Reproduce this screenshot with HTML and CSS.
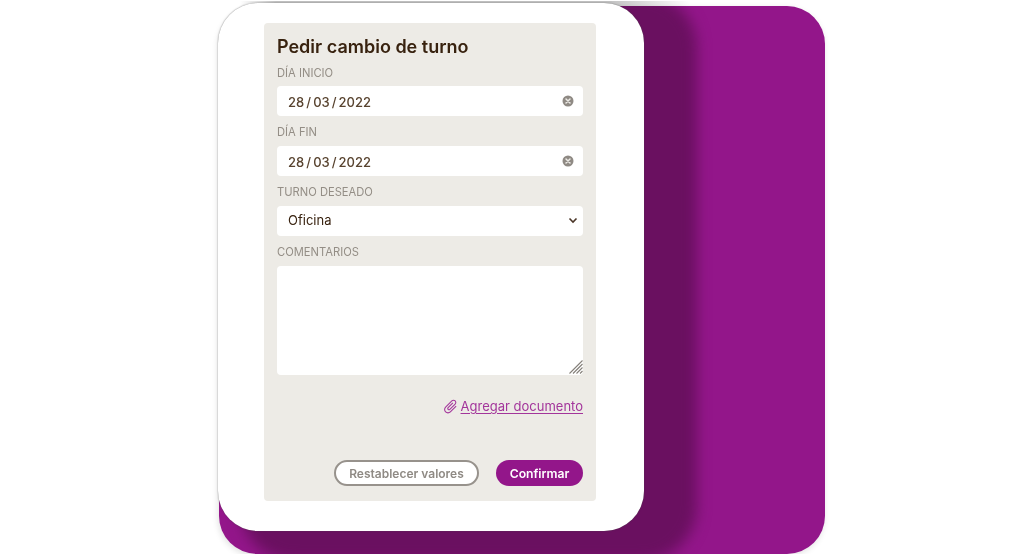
FILE: index.html
```html
<!DOCTYPE html>
<html lang="es">
<head>
<meta charset="utf-8">
<title>Pedir cambio de turno</title>
<link rel="stylesheet" href="styles.css">
</head>
<body>
<div class="stage">
  <div class="topline"></div>
  <div class="back"><div class="shade"></div></div>
  <div class="front">
    <form class="panel">
      <h1 class="title">Pedir cambio de turno</h1>
      <div class="label first">DÍA INICIO</div>
      <div class="field date">
        <span>28 / 03 / 2022</span>
        <svg class="clear" viewBox="0 0 12 12"><circle cx="6" cy="6" r="5.5" fill="#8f8a84"/><path d="M4 4l4 4M8 4l-4 4" stroke="#edebe6" stroke-width="1.5" stroke-linecap="round"/></svg>
      </div>
      <div class="label">DÍA FIN</div>
      <div class="field date">
        <span>28 / 03 / 2022</span>
        <svg class="clear" viewBox="0 0 12 12"><circle cx="6" cy="6" r="5.5" fill="#8f8a84"/><path d="M4 4l4 4M8 4l-4 4" stroke="#edebe6" stroke-width="1.5" stroke-linecap="round"/></svg>
      </div>
      <div class="label">TURNO DESEADO</div>
      <div class="field select">
        <span>Oficina</span>
        <svg class="chev" viewBox="0 0 10 7"><path d="M1.5 1.5L5 5l3.500-3.500" fill="none" stroke="#4a3527" stroke-width="1.600"/></svg>
      </div>
      <div class="label">COMENTARIOS</div>
      <div class="area">
        <svg class="grip" viewBox="0 0 14 14"><path d="M13.500 .5L.5 13.500M13.500 4L4 13.500M13.500 7.500L7.500 13.500M13.500 11L11 13.500" fill="none" stroke="#85807a" stroke-width="1.100"/></svg>
      </div>
      <div class="attach">
        <svg class="clip" viewBox="0 0 24 24"><path transform="rotate(45 12 12)" d="M16.500 6v11.500c0 2.210-1.790 4-4 4s-4-1.790-4-4V5c0-1.380 1.120-2.500 2.500-2.500s2.500 1.120 2.500 2.500v10.500c0 .55-.45 1-1 1s-1-.45-1-1V6H10v9.500c0 1.380 1.120 2.500 2.500 2.500s2.500-1.120 2.500-2.500V5c0-2.210-1.790-4-4-4S7 2.790 7 5v12.500c0 3.040 2.460 5.500 5.500 5.500s5.500-2.460 5.500-5.500V6h-1.500z" fill="#a3359b"/></svg>
        <a class="link" href="#">Agregar documento</a>
      </div>
      <div class="actions">
        <button type="button" class="btn ghost">Restablecer valores</button>
        <button type="button" class="btn primary">Confirmar</button>
      </div>
    </form>
  </div>
</div>
</body>
</html>
```
FILE: styles.css
```css
* { box-sizing: border-box; }
html, body { margin: 0; height: 100%; background: #fff; overflow: hidden; }
body { font-family: Inter, "Liberation Sans", sans-serif; }
.stage { position: relative; width: 1024px; height: 554px; filter: blur(.3px); }
.topline {
  position: absolute; left: 240px; top: 1px; width: 450px; height: 5px;
  background: linear-gradient(to right, #fff, #c2c2c2 8%, #c2c2c2 82%, #fff);
}
.back {
  position: absolute; left: 219px; top: 6px; width: 606px; height: 548px;
  background: #93168a; border-radius: 38px; overflow: hidden;
  box-shadow: -1px 2px 6px rgba(0, 0, 0, .12);
}
.shade {
  position: absolute; left: 21px; top: -13px; width: 457px; height: 568px;
  border-radius: 55px;
  background: #6a1060;
  filter: blur(7px);
}
.front {
  position: absolute; left: 218px; top: 3px; width: 426px; height: 528px;
  background: #fff; border-radius: 40px;
  box-shadow: 0 0 1.500px rgba(70, 70, 70, .75);
  padding: 20px 48px 30px 46px;
}
.panel {
  height: 478px; background: #edebe6; border-radius: 4px;
  padding: 13px 13px 15px 13px;
  display: flex; flex-direction: column;
}
.title { margin: 0; font-size: 18px; line-height: 22px; font-weight: 600; color: #38220f; }
.label { font-size: 11.200px; line-height: 14px; color: #948e86; margin-top: 9px; margin-bottom: 7px; }
.label.first { margin-top: 8px; margin-bottom: 6px; }
.field {
  height: 30px; background: #fff; border-radius: 4px; display: flex; align-items: center;
  justify-content: space-between; padding: 0 9px 0 11px;
  font-size: 13px;
}
.date { color: #58432f; word-spacing: -1.400px; font-weight: 500; padding-top: 1px; }
.date .clear { margin-top: -1px; }
.select { color: #38220f; padding-right: 5px; padding-bottom: 2px; }
.clear { width: 12px; height: 12px; }
.chev { width: 10px; height: 7px; }
.area { height: 109px; background: #fff; border-radius: 4px; display: flex; justify-content: flex-end; align-items: flex-end; }
.grip { width: 14px; height: 14px; margin-bottom: 1px; }
.attach { display: flex; justify-content: flex-end; align-items: center; gap: 1.500px; margin-top: 23px; height: 17px; }
.clip { width: 17px; height: 17px; }
.link { font-size: 13px; line-height: 17px; color: #a3359b; text-decoration: underline; text-underline-offset: 2px; }
.actions { margin-top: auto; display: flex; justify-content: flex-end; gap: 17px; }
.btn {
  height: 26px; border-radius: 13px; font-family: inherit; font-weight: 600; padding: 0;
}
.ghost { width: 145px; background: #fff; border: 2px solid #97928c; color: #8f8a84; font-size: 12px; }
.primary { width: 87px; background: #93168a; border: 0; color: #fff; font-size: 12.200px; }
```
